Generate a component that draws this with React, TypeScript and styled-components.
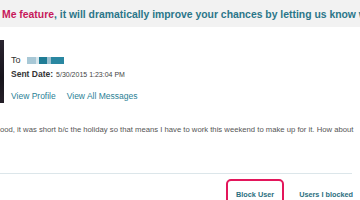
import React from 'react';
import styled, { createGlobalStyle } from 'styled-components';

const GlobalStyle = createGlobalStyle`
  html, body {
    margin: 0;
    padding: 0;
    background: #ffffff;
    font-family: "Liberation Sans", Arial, sans-serif;
  }
`;

const Page = styled.div`
  width: 360px;
  height: 200px;
  overflow: hidden;
  background: #ffffff;
`;

const Banner = styled.div`
  height: 27px;
  line-height: 29px;
  padding-left: 2px;
  background: #f2f2f2;
  font-size: 10.4px;
  font-weight: bold;
  color: #2b7689;
  white-space: nowrap;
  overflow: hidden;
`;

const Pink = styled.span`
  color: #c7185a;
`;

const SenderRow = styled.div`
  display: flex;
  gap: 7px;
  margin-top: 13px;
`;

const Photo = styled.div`
  width: 4px;
  height: 63px;
  background: linear-gradient(180deg, #2a2430 0%, #17141b 60%, #241f28 100%);
`;

const Info = styled.div`
  display: flex;
  flex-direction: column;
  padding-top: 15px;
`;

const ToLine = styled.div`
  display: flex;
  align-items: center;
  gap: 6px;
  font-size: 9px;
  color: #333333;
  height: 10px;
`;

const Redacted = styled.div`
  display: flex;
  height: 7px;
`;

const Block = styled.div<{ $w: number; $c: string }>`
  width: ${p => p.$w}px;
  height: 100%;
  background: ${p => p.$c};
`;

const SentLine = styled.div`
  margin-top: 4px;
  font-size: 8.5px;
  color: #333333;
  display: flex;
  align-items: baseline;
  gap: 3px;
`;

const Bold = styled.span`
  font-weight: bold;
`;

const DateText = styled.span`
  font-size: 7px;
  color: #444444;
`;

const Links = styled.div`
  display: flex;
  gap: 11px;
  margin-top: 12px;
  font-size: 8.5px;
`;

const Link = styled.a`
  color: #2a7f96;
  text-decoration: none;
`;

const Body = styled.p`
  margin: 22px 0 0 0;
  font-size: 7.7px;
  color: #555555;
  white-space: nowrap;
`;

const Divider = styled.div`
  margin-top: 39px;
  width: 352px;
  height: 1px;
  background: #dce6ea;
`;

const Actions = styled.div`
  display: flex;
  align-items: flex-start;
  gap: 13px;
  padding-left: 226px;
  margin-top: 5px;
`;

const ActionButton = styled.div<{ $active?: boolean }>`
  box-sizing: border-box;
  height: 30px;
  padding: 9px ${p => (p.$active ? '8px' : '0')} 0;
  border: 2px solid ${p => (p.$active ? '#e3165b' : 'transparent')};
  border-radius: 5px;
  font-size: 7.3px;
  font-weight: bold;
  color: #2b6f80;
  white-space: nowrap;
`;

export default function App() {
  return (
    <Page>
      <GlobalStyle />
      <Banner>
        <Pink>Me feature</Pink>, it will dramatically improve your chances by letting us know who
      </Banner>
      <SenderRow>
        <Photo />
        <Info>
          <ToLine>
            To
            <Redacted>
              <Block $w={9} $c="#a8c8d6" />
              <Block $w={3} $c="#d8e6ec" />
              <Block $w={8} $c="#1f7c95" />
              <Block $w={4} $c="#9cc0cf" />
              <Block $w={13} $c="#2a87a1" />
            </Redacted>
          </ToLine>
          <SentLine>
            <Bold>Sent Date:</Bold>
            <DateText>5/30/2015 1:23:04 PM</DateText>
          </SentLine>
          <Links>
            <Link>View Profile</Link>
            <Link>View All Messages</Link>
          </Links>
        </Info>
      </SenderRow>
      <Body>
        ood, it was short b/c the holiday so that means I have to work this weekend to make up for it. How about
      </Body>
      <Divider />
      <Actions>
        <ActionButton $active>Block User</ActionButton>
        <ActionButton>Users I blocked</ActionButton>
      </Actions>
    </Page>
  );
}
